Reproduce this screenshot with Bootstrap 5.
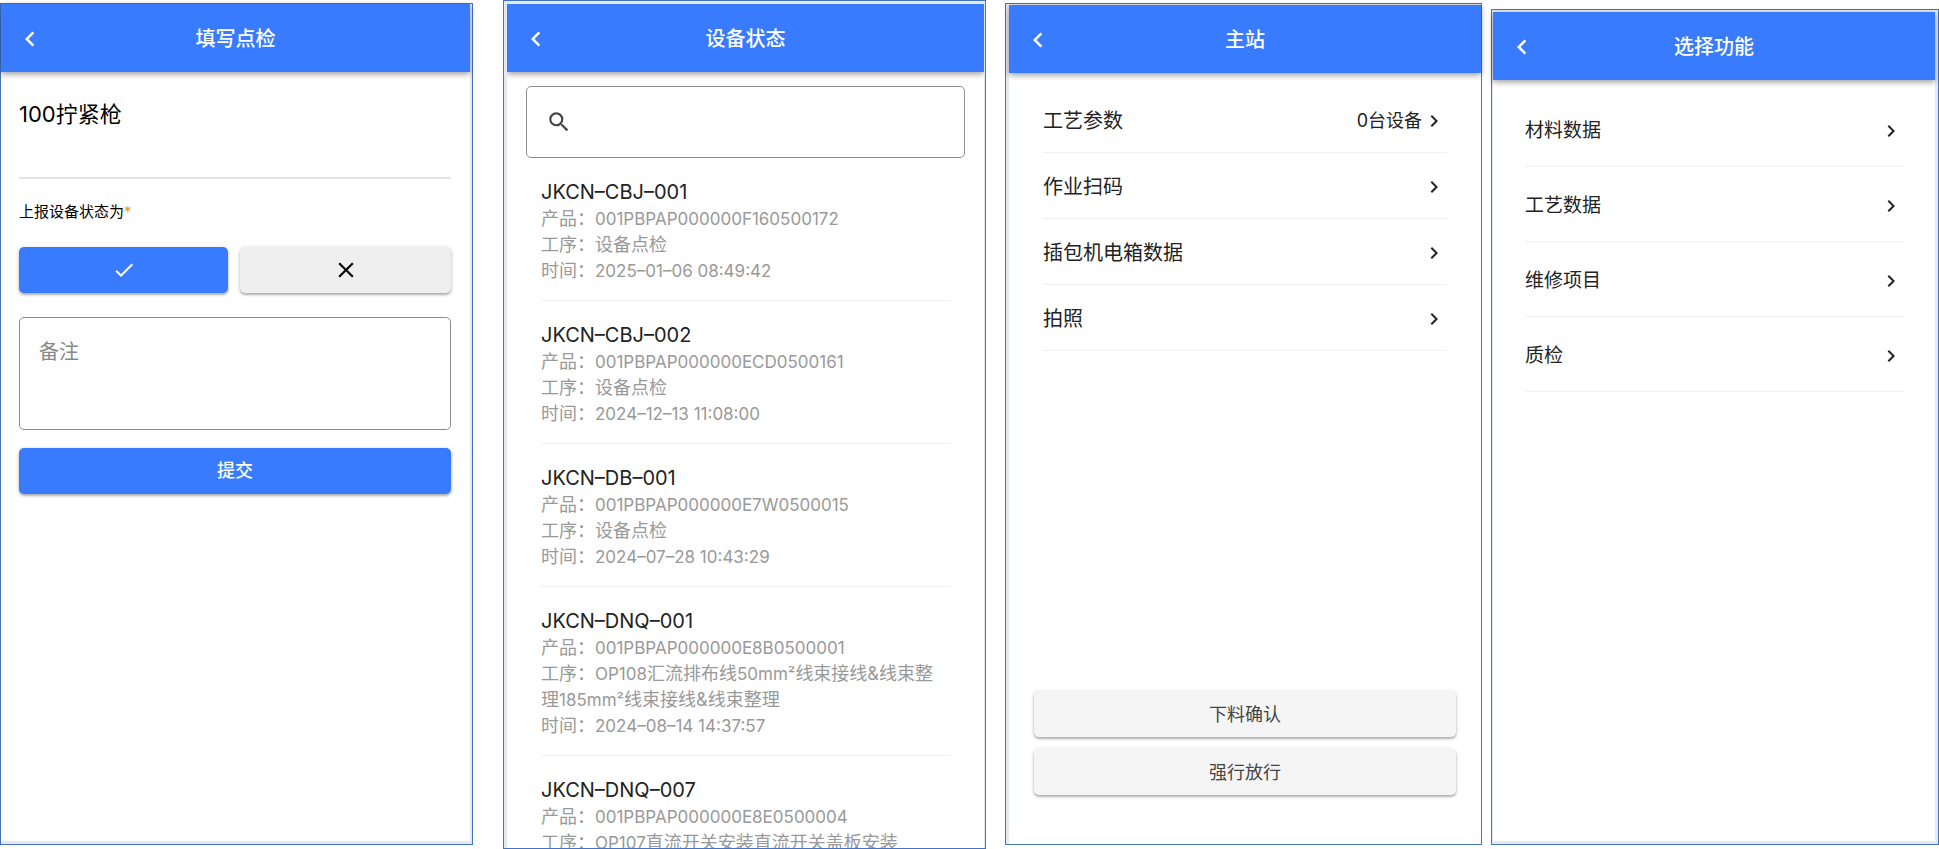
<!DOCTYPE html>
<html lang="zh-CN">
<head>
<meta charset="utf-8">
<meta name="viewport" content="width=device-width, initial-scale=1">
<title>设备点检</title>
<link href="https://cdn.jsdelivr.net/npm/bootstrap@5.3.0/dist/css/bootstrap.min.css" rel="stylesheet">
<style>
  :root { --brand: #387bff; --frame: #4472c4; --gutter: #e4e8f0; --rule: #f0f0f0; }
  body { font-family: Inter, "Noto Sans CJK SC", sans-serif; background: #fff; color: #222; }
  .board { height: 100vh; min-height: 600px; }
  .phone { border: 1px solid var(--frame); background: var(--gutter); min-width: 0; flex-basis: 0; }
  .phone-check { flex-grow: 469; margin: 3px 0 4px; padding: 0 2px 3px 0; }
  .phone-status { flex-grow: 477; margin-left: 30px; padding: 3px 1px 0 3px; }
  .phone-station { flex-grow: 472; margin: 3px 0 4px 19px; padding: 1px 0 0 3px; }
  .phone-function { flex-grow: 442; margin: 9px 0 4px 9px; padding: 2px 3px 3px 1px; }
  .screen { background: #fff; }
  .topbar { height: 68px; flex: none; background: var(--brand); color: #fff; display: grid; grid-template-columns: 58px 1fr 58px; align-items: center; padding-top: 1px; box-shadow: 0 2px 6px rgba(0,0,0,.4); z-index: 1; }
  .topbar h1 { font-size: 20px; line-height: 28px; font-weight: 500; margin: 0; text-align: center; }
  .back { color: #fff; justify-self: center; line-height: 0; }
  svg { fill: currentColor; flex: none; display: block; }

  .form-area { padding: 28px 19px 0 18px; }
  .device { font-size: 22px; line-height: 28px; font-weight: 400; color: #000; margin: 0 0 49px; }
  .divider { height: 2px; background: #e4e4e4; border: 0; opacity: 1; margin: 0 0 21px; }
  .state-label { font-size: 15px; line-height: 24px; color: #000; margin-bottom: 23px; float: none; }
  .state-label span { color: #ff9800; }
  .action { height: 46px; border: 0; border-radius: 5px; padding: 0; font-size: 18px; line-height: 24px; display: flex; align-items: center; justify-content: center; box-shadow: 0 1px 4px rgba(0,0,0,.2), 0 2px 2px rgba(0,0,0,.2); }
  .action-main, .action-main:hover { background: var(--brand); color: #fff; font-weight: 500; }
  .action-off, .action-off:hover { background: #efefef; color: #000; }
  .action-plain, .action-plain:hover { background: #f5f5f5; color: #444; padding-top: 2px; }
  .note { height: 113px; border: 1px solid #8c8c8c; border-radius: 5px; padding: 19px; font-size: 20px; line-height: 30px; resize: none; margin: 24px 0 18px; }
  .note::placeholder { color: #888; }

  .search { margin: 14px 19px 0; height: 72px; border: 1px solid #909090; border-radius: 5px; padding: 0 19px; color: #444; flex: none; }
  .search input { font-size: 20px; }
  .record { margin: 0 34px; padding: 20px 0 16px; border-bottom: 1px solid var(--rule); color: #999; font-size: 18px; line-height: 26px; }
  .record h2 { font-size: 20px; line-height: 28px; font-weight: 400; color: #222; margin: 0; }
  .latin { font-size: 17px; }

  .menu { padding: 14px 34px 0; }
  .menu a { height: 66px; color: #222; font-size: 20px; line-height: 28px; border-bottom: 1px solid var(--rule); padding: 2px 1px 0 0; }
  .menu .count { font-size: 18px; }
  .phone-function .menu { padding: 12px 31px 0 32px; }
  .phone-function .menu a { height: 75px; font-size: 19px; padding-top: 4px; }
  .bottom-actions { padding: 0 25px 49px; }
</style>
</head>
<body>
<svg class="d-none" aria-hidden="true">
  <symbol id="i-left" viewBox="0 0 24 24"><path d="M15.41 7.41 14 6l-6 6 6 6 1.41-1.41L10.83 12z"/></symbol>
  <symbol id="i-right" viewBox="0 0 24 24"><path d="M8.59 16.59 13.17 12 8.59 7.41 10 6l6 6-6 6z"/></symbol>
  <symbol id="i-check" viewBox="0 0 24 24"><path d="M9 16.17 4.83 12l-1.42 1.41L9 19 21 7l-1.41-1.41z"/></symbol>
  <symbol id="i-close" viewBox="0 0 24 24"><path d="M19 6.41 17.59 5 12 10.59 6.41 5 5 6.41 10.59 12 5 17.59 6.41 19 12 13.41 17.59 19 19 17.59 13.41 12z"/></symbol>
  <symbol id="i-search" viewBox="0 0 24 24"><path d="M15.5 14h-.79l-.28-.27A6.47 6.47 0 0 0 16 9.5 6.5 6.5 0 1 0 9.5 16c1.61 0 3.09-.59 4.23-1.57l.27.28v.79l5 4.99L20.49 19zm-6 0C7.01 14 5 11.99 5 9.5S7.01 5 9.5 5 14 7.01 14 9.5 11.99 14 9.5 14z"/></symbol>
</svg>

<main class="board d-flex align-items-stretch overflow-hidden">

  <section class="phone phone-check d-flex">
    <div class="screen d-flex flex-column w-100">
      <header class="topbar">
        <a class="back" href="#" aria-label="返回"><svg width="30" height="30"><use href="#i-left"/></svg></a>
        <h1>填写点检</h1>
      </header>
      <form class="form-area">
        <h2 class="device">100拧紧枪</h2>
        <hr class="divider">
        <fieldset>
          <legend class="state-label">上报设备状态为<span>*</span></legend>
          <div class="d-flex" style="gap:12px">
            <button type="button" class="btn action action-main flex-fill" aria-label="正常"><svg width="24" height="24"><use href="#i-check"/></svg></button>
            <button type="button" class="btn action action-off flex-fill" aria-label="异常"><svg width="26" height="26"><use href="#i-close"/></svg></button>
          </div>
        </fieldset>
        <textarea class="form-control note" placeholder="备注" aria-label="备注"></textarea>
        <button type="button" class="btn action action-main w-100">提交</button>
      </form>
    </div>
  </section>

  <section class="phone phone-status d-flex">
    <div class="screen d-flex flex-column w-100 overflow-hidden">
      <header class="topbar">
        <a class="back" href="#" aria-label="返回"><svg width="30" height="30"><use href="#i-left"/></svg></a>
        <h1>设备状态</h1>
      </header>
      <label class="search d-flex align-items-center">
        <svg width="26" height="26"><use href="#i-search"/></svg>
        <input type="text" class="form-control border-0 shadow-none" aria-label="搜索">
      </label>
      <article class="record">
        <h2>JKCN–CBJ–001</h2>
        <div>产品：<span class="latin">001PBPAP000000F160500172</span></div>
        <div>工序：设备点检</div>
        <div>时间：<span class="latin">2025–01–06 08:49:42</span></div>
      </article>
      <article class="record">
        <h2>JKCN–CBJ–002</h2>
        <div>产品：<span class="latin">001PBPAP000000ECD0500161</span></div>
        <div>工序：设备点检</div>
        <div>时间：<span class="latin">2024–12–13 11:08:00</span></div>
      </article>
      <article class="record">
        <h2>JKCN–DB–001</h2>
        <div>产品：<span class="latin">001PBPAP000000E7W0500015</span></div>
        <div>工序：设备点检</div>
        <div>时间：<span class="latin">2024–07–28 10:43:29</span></div>
      </article>
      <article class="record">
        <h2>JKCN–DNQ–001</h2>
        <div>产品：<span class="latin">001PBPAP000000E8B0500001</span></div>
        <div>工序：<span class="latin">OP108</span>汇流排布线<span class="latin">50mm²</span>线束接线&amp;线束整理<span class="latin">185mm²</span>线束接线&amp;线束整理</div>
        <div>时间：<span class="latin">2024–08–14 14:37:57</span></div>
      </article>
      <article class="record">
        <h2>JKCN–DNQ–007</h2>
        <div>产品：<span class="latin">001PBPAP000000E8E0500004</span></div>
        <div>工序：<span class="latin">OP107</span>直流开关安装直流开关盖板安装</div>
      </article>
    </div>
  </section>

  <section class="phone phone-station d-flex">
    <div class="screen d-flex flex-column w-100">
      <header class="topbar">
        <a class="back" href="#" aria-label="返回"><svg width="30" height="30"><use href="#i-left"/></svg></a>
        <h1>主站</h1>
      </header>
      <nav class="menu">
        <a href="#" class="d-flex align-items-center text-decoration-none"><span class="me-auto">工艺参数</span><span class="count">0台设备</span><svg width="24" height="24"><use href="#i-right"/></svg></a>
        <a href="#" class="d-flex align-items-center text-decoration-none"><span class="me-auto">作业扫码</span><svg width="24" height="24"><use href="#i-right"/></svg></a>
        <a href="#" class="d-flex align-items-center text-decoration-none"><span class="me-auto">插包机电箱数据</span><svg width="24" height="24"><use href="#i-right"/></svg></a>
        <a href="#" class="d-flex align-items-center text-decoration-none"><span class="me-auto">拍照</span><svg width="24" height="24"><use href="#i-right"/></svg></a>
      </nav>
      <div class="bottom-actions mt-auto d-grid" style="gap:12px">
        <button type="button" class="btn action action-plain">下料确认</button>
        <button type="button" class="btn action action-plain">强行放行</button>
      </div>
    </div>
  </section>

  <section class="phone phone-function d-flex">
    <div class="screen d-flex flex-column w-100">
      <header class="topbar">
        <a class="back" href="#" aria-label="返回"><svg width="30" height="30"><use href="#i-left"/></svg></a>
        <h1>选择功能</h1>
      </header>
      <nav class="menu">
        <a href="#" class="d-flex align-items-center text-decoration-none"><span class="me-auto">材料数据</span><svg width="24" height="24"><use href="#i-right"/></svg></a>
        <a href="#" class="d-flex align-items-center text-decoration-none"><span class="me-auto">工艺数据</span><svg width="24" height="24"><use href="#i-right"/></svg></a>
        <a href="#" class="d-flex align-items-center text-decoration-none"><span class="me-auto">维修项目</span><svg width="24" height="24"><use href="#i-right"/></svg></a>
        <a href="#" class="d-flex align-items-center text-decoration-none"><span class="me-auto">质检</span><svg width="24" height="24"><use href="#i-right"/></svg></a>
      </nav>
    </div>
  </section>

</main>
<script src="https://cdn.jsdelivr.net/npm/bootstrap@5.3.0/dist/js/bootstrap.bundle.min.js"></script>
</body>
</html>
